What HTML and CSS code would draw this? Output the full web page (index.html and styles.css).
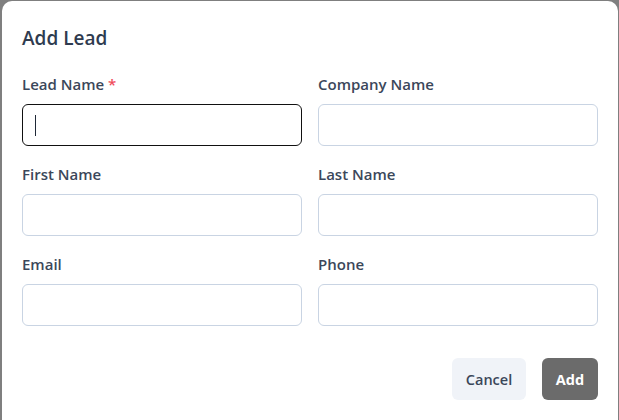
FILE: index.html
```html
<!DOCTYPE html>
<html lang="en">
<head>
<meta charset="utf-8">
<title>Add Lead</title>
<link rel="stylesheet" href="styles.css">
</head>
<body>
<div class="backdrop">
  <div class="modal">
    <h2 class="title">Add Lead</h2>
    <form class="form">
      <div class="grid">
        <div class="field">
          <label class="label">Lead Name <span class="req">*</span></label>
          <div class="input focused"><span class="caret"></span></div>
        </div>
        <div class="field">
          <label class="label">Company Name</label>
          <div class="input"></div>
        </div>
        <div class="field">
          <label class="label">First Name</label>
          <div class="input"></div>
        </div>
        <div class="field">
          <label class="label">Last Name</label>
          <div class="input"></div>
        </div>
        <div class="field">
          <label class="label">Email</label>
          <div class="input"></div>
        </div>
        <div class="field">
          <label class="label">Phone</label>
          <div class="input"></div>
        </div>
      </div>
      <div class="actions">
        <button type="button" class="btn btn-cancel">Cancel</button>
        <button type="button" class="btn btn-add">Add</button>
      </div>
    </form>
  </div>
</div>
</body>
</html>
```
FILE: styles.css
```css
* { box-sizing: border-box; }
html, body {
  margin: 0;
  padding: 0;
  width: 619px;
  height: 420px;
  overflow: hidden;
  background: #7f7f7f;
  font-family: "Open Sans", "Noto Sans", sans-serif;
}
.backdrop {
  padding: 1px 0 0 2px;
}
.modal {
  width: 616px;
  height: 440px;
  background: #ffffff;
  border-radius: 10px;
  padding: 23px 20px 0 20px;
}
.title {
  margin: 0;
  font-size: 19px;
  line-height: 28px;
  font-weight: 600;
  color: #2f3b4f;
}
.form {
  margin-top: 22px;
}
.grid {
  display: grid;
  grid-template-columns: 280px 280px;
  column-gap: 16px;
  row-gap: 18px;
}
.field {
  display: flex;
  flex-direction: column;
}
.label {
  font-size: 15px;
  line-height: 20px;
  font-weight: 600;
  color: #3b475a;
  margin-bottom: 10px;
}
.req { color: #ef4c5c; }
.input {
  height: 42px;
  border: 1px solid #c9d4e3;
  border-radius: 6px;
  background: #fff;
  position: relative;
}
.input.focused {
  border-color: #111;
}
.caret {
  position: absolute;
  left: 12px;
  top: 10px;
  width: 1px;
  height: 21px;
  background: #1f2937;
}
.actions {
  display: flex;
  justify-content: flex-end;
  gap: 16px;
  margin-top: 32px;
}
.btn {
  height: 42px;
  border: none;
  border-radius: 6px;
  font-family: inherit;
  font-size: 14.5px;
  font-weight: 600;
  padding: 0;
}
.btn-cancel {
  width: 74px;
  background: #f0f3f8;
  color: #3b475a;
}
.btn-add {
  width: 56px;
  background: #6b6b6b;
  color: #ffffff;
  font-weight: 700;
}
```
